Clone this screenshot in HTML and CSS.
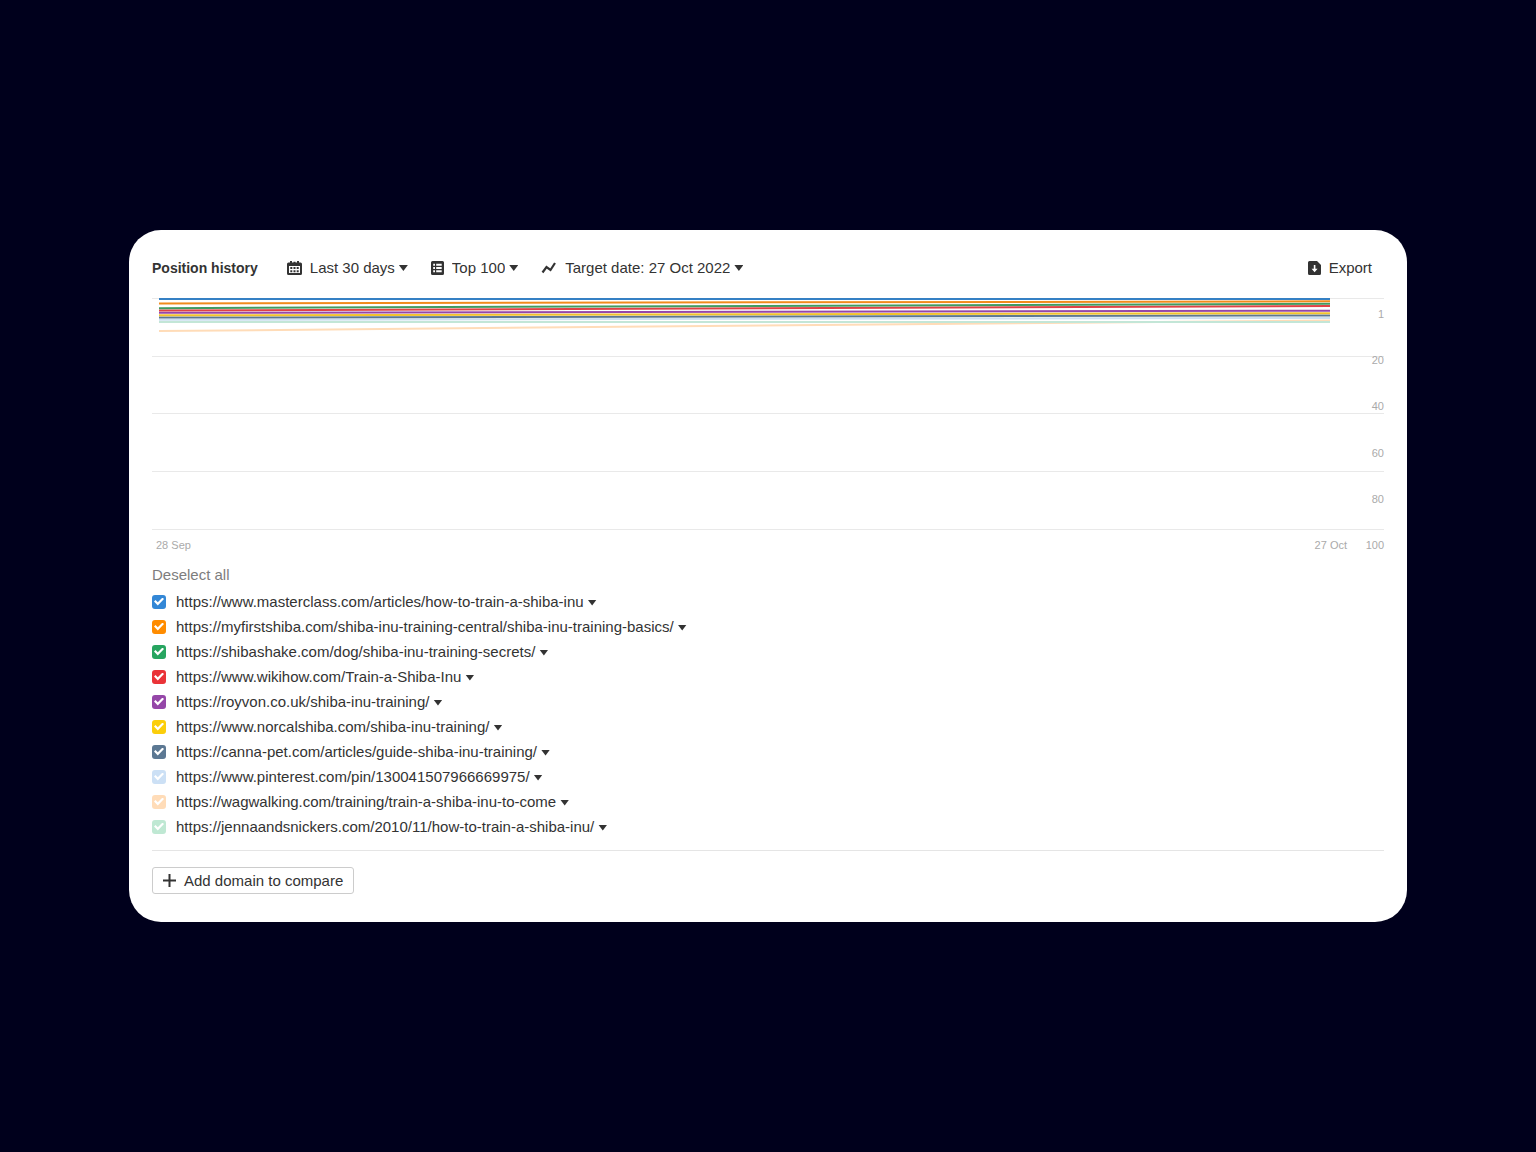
FILE: index.html
```
<!DOCTYPE html>
<html lang="en">
<head>
    <meta charset="UTF-8">
    <meta name="viewport" content="width=device-width, initial-scale=1.0">
    <title>Position history</title>
    <link rel="stylesheet" href="styles.css">
</head>
<body>
    <main class="card">
        <header class="toolbar">
            <h1>Position history</h1>
            <label class="filter">
                <svg class="icon" width="15" height="15" viewBox="0 0 15 15" aria-hidden="true">
                    <path fill="#333" fill-rule="evenodd" d="M3 0h2v1.500h1.500V.8h2v.7H10V0h2v1.500h1.500A1.500 1.500 0 0 1 15 3v9.500a1.500 1.500 0 0 1-1.500 1.500h-12A1.500 1.500 0 0 1 0 12.500V3a1.500 1.500 0 0 1 1.500-1.500H3zM2 5v7h11V5z"/>
                    <path fill="#333" d="M3.300 6h2v2h-2zM6.500 6h2v2h-2zM9.700 6h2v2h-2zM3.300 9.200h2v2h-2zM6.500 9.200h2v2h-2zM9.700 9.200h2v2h-2z"/>
                </svg>
                <select aria-label="Period">
                    <option>Last 30 days</option>
                    <option>Last 7 days</option>
                </select>
                <span class="caret"></span>
            </label>
            <label class="filter">
                <svg class="icon" width="13" height="14" viewBox="0 0 13 14" aria-hidden="true">
                    <path fill="#333" fill-rule="evenodd" d="M1.500 0h10A1.500 1.500 0 0 1 13 1.500v11a1.500 1.500 0 0 1-1.500 1.500h-10A1.500 1.500 0 0 1 0 12.500v-11A1.500 1.500 0 0 1 1.500 0zM2.200 2.800v2h1.800v-2zM5.200 2.800v2h5.500v-2zM2.200 6v2h1.800V6zM5.200 6v2h5.500V6zM2.200 9.200v2h1.800v-2zM5.200 9.200v2h5.500v-2z"/>
                </svg>
                <select aria-label="Positions">
                    <option>Top 100</option>
                    <option>Top 10</option>
                </select>
                <span class="caret"></span>
            </label>
            <label class="filter">
                <svg class="icon" width="16" height="12" viewBox="0 0 16 12" aria-hidden="true">
                    <path fill="none" stroke="#333" stroke-width="2.200" d="M1.500 10.500 5.500 5 9.500 8 14 1"/>
                </svg>
                <select aria-label="Target date">
                    <option>Target date: 27 Oct 2022</option>
                    <option>Target date: 28 Sep 2022</option>
                </select>
                <span class="caret"></span>
            </label>
            <button class="export" type="button">
                <svg width="13" height="14" viewBox="0 0 13 14" aria-hidden="true">
                    <path fill="#333" d="M1.500 0H9l4 4v8.500a1.500 1.500 0 0 1-1.500 1.500h-10A1.500 1.500 0 0 1 0 12.500v-11A1.500 1.500 0 0 1 1.500 0z"/>
                    <path fill="#fff" d="M5.800 4h1.600v3.700h2.200L6.600 11.200 3.600 7.700h2.200z"/>
                </svg>
                Export
            </button>
        </header>

        <section class="chart" aria-label="Position chart">
            <svg class="plot" viewBox="0 0 1232 236" preserveAspectRatio="none">
                <g class="grid-lines">
                    <path d="M0 3.500H1232M0 61.500H1232M0 118.500H1232M0 176.500H1232M0 234.500H1232"/>
                </g>
                <g class="series">
                    <path stroke="#ffdcb8" d="M7 36 1178 25.500"/>
                    <path stroke="#c3e6d7" d="M7 27H1178"/>
                    <path stroke="#cce0f0" d="M7 24.800 1178 23"/>
                    <path stroke="#5c7893" d="M7 22.600 1178 20.500"/>
                    <path stroke="#f2c32c" d="M7 20.300 1178 18.200"/>
                    <path stroke="#9547a8" d="M7 17.800 1178 15.700"/>
                    <path stroke="#df4247" d="M7 15.500 1178 11"/>
                    <path stroke="#419b61" d="M7 13.200 1178 8.700"/>
                    <path stroke="#f18b1c" d="M7 8.500 1178 6.300"/>
                    <path stroke="#3580c4" d="M7 4H1178"/>
                </g>
            </svg>
            <div class="y-axis">
                <span>1</span>
                <span>20</span>
                <span>40</span>
                <span>60</span>
                <span>80</span>
                <span>100</span>
            </div>
            <div class="x-axis">
                <span>28 Sep</span>
                <span>27 Oct</span>
            </div>
        </section>

        <button class="deselect" type="button">Deselect all</button>
        <ul class="pages">
            <li>
                <label><input class="blue" type="checkbox" checked>https://www.masterclass.com/articles/how-to-train-a-shiba-inu</label>
                <button type="button" aria-label="Page options"><span class="caret"></span></button>
            </li>
            <li>
                <label><input class="orange" type="checkbox" checked>https://myfirstshiba.com/shiba-inu-training-central/shiba-inu-training-basics/</label>
                <button type="button" aria-label="Page options"><span class="caret"></span></button>
            </li>
            <li>
                <label><input class="green" type="checkbox" checked>https://shibashake.com/dog/shiba-inu-training-secrets/</label>
                <button type="button" aria-label="Page options"><span class="caret"></span></button>
            </li>
            <li>
                <label><input class="red" type="checkbox" checked>https://www.wikihow.com/Train-a-Shiba-Inu</label>
                <button type="button" aria-label="Page options"><span class="caret"></span></button>
            </li>
            <li>
                <label><input class="purple" type="checkbox" checked>https://royvon.co.uk/shiba-inu-training/</label>
                <button type="button" aria-label="Page options"><span class="caret"></span></button>
            </li>
            <li>
                <label><input class="yellow" type="checkbox" checked>https://www.norcalshiba.com/shiba-inu-training/</label>
                <button type="button" aria-label="Page options"><span class="caret"></span></button>
            </li>
            <li>
                <label><input class="slate" type="checkbox" checked>https://canna-pet.com/articles/guide-shiba-inu-training/</label>
                <button type="button" aria-label="Page options"><span class="caret"></span></button>
            </li>
            <li>
                <label><input class="sky" type="checkbox" checked>https://www.pinterest.com/pin/130041507966669975/</label>
                <button type="button" aria-label="Page options"><span class="caret"></span></button>
            </li>
            <li>
                <label><input class="peach" type="checkbox" checked>https://wagwalking.com/training/train-a-shiba-inu-to-come</label>
                <button type="button" aria-label="Page options"><span class="caret"></span></button>
            </li>
            <li>
                <label><input class="mint" type="checkbox" checked>https://jennaandsnickers.com/2010/11/how-to-train-a-shiba-inu/</label>
                <button type="button" aria-label="Page options"><span class="caret"></span></button>
            </li>
        </ul>

        <footer>
            <button class="add" type="button">
                <svg width="13" height="13" viewBox="0 0 13 13" aria-hidden="true">
                    <path fill="none" stroke="#333" stroke-width="2" d="M6.500 0v13M0 6.500h13"/>
                </svg>
                Add domain to compare
            </button>
        </footer>
    </main>
</body>
</html>
```
FILE: styles.css
```
* {
    box-sizing: border-box;
}
body {
    margin: 0;
    min-height: 100vh;
    display: flex;
    align-items: center;
    background-color: #00001c;
    color: #333;
    font-family: "Liberation Sans", Arial, sans-serif;
    font-size: 15px;
    line-height: 20px;
}
button, select, input {
    margin: 0;
    padding: 0;
    border: none;
    background: none;
    color: inherit;
    font: inherit;
    cursor: pointer;
}
.card {
    flex: 1;
    margin: 0 129px;
    padding: 28px 23px;
    border-radius: 32px;
    background-color: white;
}

/* toolbar */
.toolbar {
    display: flex;
    align-items: center;
    gap: 23px;
    height: 20px;
}
h1 {
    margin: 0 6px 0 0;
    font-size: 14px;
    line-height: 20px;
}
.filter {
    display: flex;
    align-items: center;
}
.filter .icon {
    margin-right: 8px;
}
select {
    appearance: none;
    field-sizing: content;
    height: 20px;
}
.caret {
    display: block;
    width: 9px;
    height: 6px;
    background-color: #333;
    clip-path: polygon(0 0, 100% 0, 50% 100%);
}
.filter .caret {
    margin-left: 4px;
    pointer-events: none;
}
.export {
    display: flex;
    align-items: center;
    gap: 8px;
    margin-left: auto;
    margin-right: 12px;
}

/* chart */
.chart {
    position: relative;
    margin-top: 17px;
}
.plot {
    display: block;
    width: 100%;
    height: 236px;
}
.plot path {
    fill: none;
    vector-effect: non-scaling-stroke;
}
.grid-lines path {
    stroke: #e9e9e9;
    stroke-width: 1px;
}
.series path {
    stroke-width: 2px;
}
.y-axis {
    position: absolute;
    top: 11px;
    right: 0;
    bottom: 0;
    display: flex;
    flex-direction: column;
    justify-content: space-between;
    text-align: right;
}
.y-axis, .x-axis {
    color: #aaa;
    font-size: 11px;
    line-height: 16px;
}
.x-axis {
    display: flex;
    justify-content: space-between;
    margin-top: 6px;
    padding: 0 37px 0 4px;
}

/* compared pages */
.deselect {
    display: block;
    margin-top: 12px;
    color: #7d7d7d;
}
.pages {
    margin: 4px 0 0;
    padding: 0 0 11px;
    border-bottom: 1px solid #e5e5e5;
    list-style: none;
}
.pages li {
    display: flex;
    align-items: center;
    gap: 4px;
    height: 25px;
}
.pages label {
    display: flex;
    align-items: center;
    gap: 10px;
    cursor: pointer;
}
.pages button {
    padding-top: 2px;
}
input[type="checkbox"] {
    appearance: none;
    display: grid;
    place-content: center;
    width: 14px;
    height: 14px;
    border-radius: 3px;
}
input[type="checkbox"]:checked::before {
    content: "";
    width: 10px;
    height: 8px;
    background-color: white;
    clip-path: polygon(0 50%, 15% 31%, 38% 58%, 85% 0, 100% 19%, 38% 100%);
}
.blue { background-color: #3387d6; }
.orange { background-color: #ff8c00; }
.green { background-color: #27a560; }
.red { background-color: #ea3338; }
.purple { background-color: #9547a8; }
.yellow { background-color: #fbce0b; }
.slate { background-color: #5c7893; }
.sky { background-color: #cce0f5; }
.peach { background-color: #ffdcb8; }
.mint { background-color: #bfe8d3; }

footer {
    padding-top: 16px;
}
.add {
    display: flex;
    align-items: center;
    gap: 8px;
    height: 27px;
    padding: 0 10px;
    border: 1px solid #ccc;
    border-radius: 3px;
}
```
